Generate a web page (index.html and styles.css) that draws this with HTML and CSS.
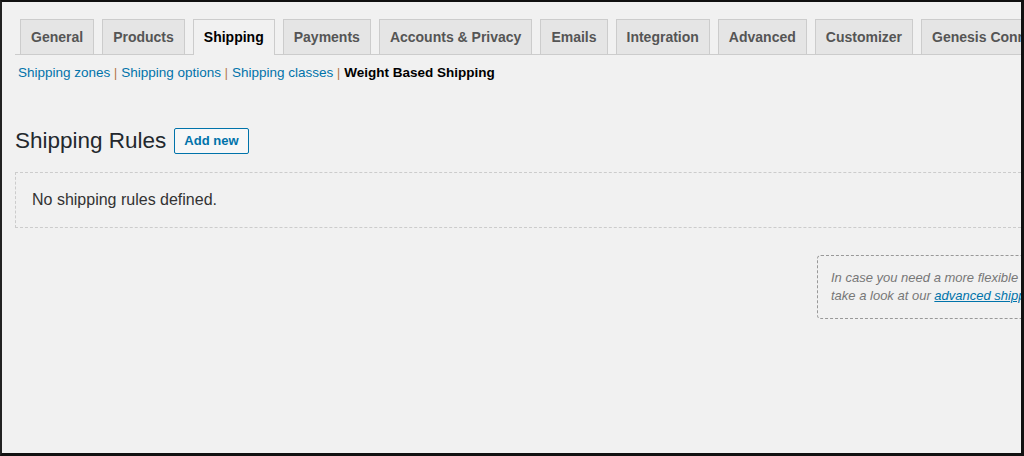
FILE: index.html
```html
<!DOCTYPE html>
<html lang="en">
<head>
  <meta charset="UTF-8">
  <meta name="viewport" content="width=device-width, initial-scale=1.0">
  <title>Shipping Settings</title>
  <link rel="stylesheet" href="styles.css">
</head>
<body>
  <div class="frame">
    <div class="wrap">
      <nav class="nav-tab-wrapper">
        <a class="nav-tab" href="#">General</a>
        <a class="nav-tab" href="#">Products</a>
        <a class="nav-tab nav-tab-active" href="#">Shipping</a>
        <a class="nav-tab" href="#">Payments</a>
        <a class="nav-tab" href="#">Accounts &amp; Privacy</a>
        <a class="nav-tab" href="#">Emails</a>
        <a class="nav-tab" href="#">Integration</a>
        <a class="nav-tab" href="#">Advanced</a>
        <a class="nav-tab" href="#">Customizer</a>
        <a class="nav-tab" href="#">Genesis Connect</a>
      </nav>

      <ul class="subsubsub">
        <li><a href="#">Shipping zones</a> <span class="sep">|</span></li>
        <li><a href="#">Shipping options</a> <span class="sep">|</span></li>
        <li><a href="#">Shipping classes</a> <span class="sep">|</span></li>
        <li><a href="#" class="current">Weight Based Shipping</a></li>
      </ul>

      <div class="rules-head">
        <h2>Shipping Rules</h2>
        <button class="add-new">Add new</button>
      </div>

      <div class="rules-empty">No shipping rules defined.</div>

      <div class="note-row">
        <div class="note">
          In case you need a more flexible shipping solution,<br>
          take a look at our <a href="#">advanced shipping plugin</a>.
        </div>
      </div>
    </div>
  </div>
</body>
</html>
```

FILE: styles.css
```css
html, body {
  margin: 0;
  padding: 0;
}
body {
  font-family: "Liberation Sans", Arial, sans-serif;
  color: #444;
  overflow: hidden;
}
.frame {
  width: 1024px;
  height: 456px;
  box-sizing: border-box;
  border-top: 2px solid #111;
  border-left: 2px solid #222;
  border-right: 3px solid #111;
  border-bottom: 3px solid #111;
  background: #f1f1f1;
  overflow: hidden;
}
.wrap {
  padding: 17px 0 0 13px;
}
.nav-tab-wrapper {
  display: flex;
  white-space: nowrap;
  border-bottom: 1px solid #ccc;
  padding-left: 5px;
  gap: 8px;
}
.nav-tab {
  display: block;
  flex: none;
  padding: 5px 10px;
  font-size: 14px;
  line-height: 24px;
  font-weight: bold;
  color: #555;
  background: #e5e5e5;
  border: 1px solid #ccc;
  border-bottom: none;
  text-decoration: none;
}
.nav-tab-active {
  background: #f1f1f1;
  color: #000;
  margin-bottom: -1px;
  padding-bottom: 6px;
}
.subsubsub {
  list-style: none;
  margin: 9px 0 0 3px;
  padding: 0;
  display: flex;
  font-size: 13.5px;
  line-height: 18px;
  color: #72777c;
}
.subsubsub li {
  margin-right: 4px;
}
.subsubsub a {
  color: #0073aa;
  text-decoration: none;
}
.subsubsub a.current {
  color: #000;
  font-weight: bold;
}
.sep {
  color: #b0703a;
  font-size: 12px;
}
.rules-head {
  display: flex;
  align-items: center;
  gap: 8px;
  margin-top: 44px;
}
.rules-head h2 {
  margin: 0;
  font-size: 22.5px;
  line-height: 29px;
  font-weight: normal;
  color: #23282d;
}
.add-new {
  font-family: inherit;
  font-size: 13px;
  font-weight: bold;
  line-height: 24px;
  height: 26px;
  padding: 0 9px;
  color: #0073aa;
  background: #f7f7f7;
  border: 1px solid #0073aa;
  border-radius: 2px;
}
.rules-empty {
  margin-top: 17px;
  border: 1px dashed #ccc;
  border-right: none;
  padding: 17px 16px;
  font-size: 16px;
  line-height: 20px;
  color: #333;
}
.note-row {
  display: flex;
  justify-content: flex-end;
  margin-top: 27px;
  margin-right: -140px;
}
.note {
  width: 316px;
  flex: none;
  border: 1px dashed #999;
  border-radius: 4px;
  padding: 13px 13px 13px 13px;
  font-size: 13px;
  line-height: 18px;
  font-style: italic;
  color: #777;
  white-space: nowrap;
}
.note a {
  color: #0073aa;
  text-decoration: underline;
}
```
